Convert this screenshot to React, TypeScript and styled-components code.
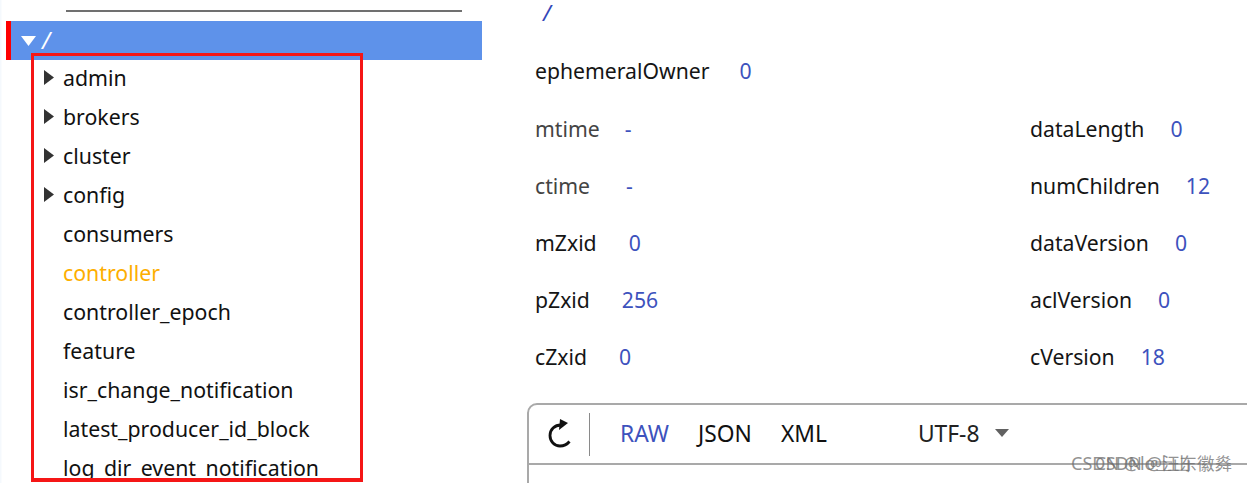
import React from "react";
import styled, { createGlobalStyle } from "styled-components";

const GlobalStyle = createGlobalStyle`
  html, body {
    margin: 0;
    padding: 0;
    background: #ffffff;
  }
  body {
    font-family: "Noto Sans", "Open Sans", sans-serif;
  }
`;

const nodes = [
  { name: "admin", arrow: true },
  { name: "brokers", arrow: true },
  { name: "cluster", arrow: true },
  { name: "config", arrow: true },
  { name: "consumers" },
  { name: "controller", active: true },
  { name: "controller_epoch" },
  { name: "feature" },
  { name: "isr_change_notification" },
  { name: "latest_producer_id_block" },
  { name: "log_dir_event_notification" },
];

const App: React.FC = () => (
  <Page>
    <GlobalStyle />
    <Sidebar>
      <Rule />
      <RootRow>
        <svg width="15" height="10" viewBox="0 0 15 10" aria-hidden="true">
          <polygon points="0,0 15,0 7.5,10" fill="#ffffff" />
        </svg>
        <RootLabel>/</RootLabel>
      </RootRow>
      <Tree>
        {nodes.map((n) => (
          <TreeRow key={n.name} $active={n.active}>
            <Caret>
              {n.arrow && (
                <svg width="10" height="15" viewBox="0 0 10 15" aria-hidden="true">
                  <polygon points="0,0 10,7.5 0,15" fill="#333333" />
                </svg>
              )}
            </Caret>
            {n.name}
          </TreeRow>
        ))}
      </Tree>
      <Highlight />
    </Sidebar>
    <Detail>
      <PathLabel>/</PathLabel>
      <FieldGrid>
        <WideField $gap={30}>
          <Key>ephemeralOwner</Key>
          <Value>0</Value>
        </WideField>
        <Field $gap={25}>
          <Key $muted>mtime</Key>
          <Value>-</Value>
        </Field>
        <Field>
          <Key>dataLength</Key>
          <Value>0</Value>
        </Field>
        <Field $gap={36}>
          <Key $muted>ctime</Key>
          <Value>-</Value>
        </Field>
        <Field>
          <Key>numChildren</Key>
          <Value>12</Value>
        </Field>
        <Field $gap={32}>
          <Key>mZxid</Key>
          <Value>0</Value>
        </Field>
        <Field>
          <Key>dataVersion</Key>
          <Value>0</Value>
        </Field>
        <Field $gap={32}>
          <Key>pZxid</Key>
          <Value>256</Value>
        </Field>
        <Field>
          <Key>aclVersion</Key>
          <Value>0</Value>
        </Field>
        <Field $gap={32}>
          <Key>cZxid</Key>
          <Value>0</Value>
        </Field>
        <Field>
          <Key>cVersion</Key>
          <Value>18</Value>
        </Field>
      </FieldGrid>
      <Editor>
        <Toolbar>
          <RefreshButton>
            <svg width="24" height="32" viewBox="0 0 24 32" aria-hidden="true">
              <path
                d="M14 7 C7.5 7 3 11.5 3 17.5 C3 23.5 7.5 28 13 28 C16.5 28 20 26.5 22.5 23.5"
                fill="none"
                stroke="#111111"
                strokeWidth="2.8"
              />
              <polygon points="13,1 21,5 12,12" fill="#111111" />
            </svg>
          </RefreshButton>
          <Tabs>
            <Tab $active>RAW</Tab>
            <Tab>JSON</Tab>
            <Tab>XML</Tab>
          </Tabs>
          <Encoding>
            UTF-8
            <svg width="14" height="8" viewBox="0 0 14 8" aria-hidden="true">
              <polygon points="0,0 14,0 7,8" fill="#616161" />
            </svg>
          </Encoding>
        </Toolbar>
      </Editor>
    </Detail>
    <Watermark>CSDN @lo士山</Watermark>
    <WatermarkGhost>CSDN @汪东徽㷠</WatermarkGhost>
  </Page>
);

const Page = styled.div`
  position: relative;
  display: flex;
  width: 1247px;
  height: 483px;
  overflow: hidden;
  background: #ffffff;
`;

const Sidebar = styled.aside`
  position: relative;
  flex: none;
  width: 482px;
  padding-left: 6px;
  box-sizing: border-box;
  background: linear-gradient(to right, #f5f9fd 0, #f5f9fd 1px, #ffffff 2px);
`;

const Rule = styled.div`
  height: 2px;
  margin: 10px 20px 9px 60px;
  background: #707070;
`;

const RootRow = styled.div`
  display: flex;
  align-items: center;
  gap: 6px;
  height: 39px;
  box-sizing: border-box;
  padding-left: 10px;
  border-left: 5px solid #fe0000;
  background: #5e92ea;
  color: #ffffff;
`;

const RootLabel = styled.span`
  font-size: 23px;
  font-style: italic;
  line-height: 1;
`;

const Tree = styled.div`
  display: flex;
  flex-direction: column;
  margin-top: -2px;
`;

const TreeRow = styled.div<{ $active?: boolean }>`
  display: flex;
  align-items: center;
  height: 39px;
  flex: none;
  font-size: 21.3px;
  white-space: nowrap;
  color: ${(p) => (p.$active ? "#fdae00" : "#111111")};
`;

const Caret = styled.span`
  display: flex;
  align-items: center;
  width: 19px;
  margin-left: 38px;
`;

const Highlight = styled.div`
  position: absolute;
  left: 31px;
  top: 53px;
  width: 326px;
  height: 422px;
  border: 3px solid #f51616;
  border-bottom-width: 4px;
`;

const Detail = styled.main`
  flex: 1;
  min-width: 0;
  padding-left: 45px;
`;

const PathLabel = styled.div`
  height: 24px;
  padding-left: 16px;
  font-size: 22px;
  font-style: italic;
  line-height: 24px;
  color: #3346b8;
`;

const FieldGrid = styled.div`
  display: grid;
  grid-template-columns: 495px 1fr;
  grid-auto-rows: 57px;
  margin-top: 19px;
  padding-left: 8px;
`;

const Field = styled.div<{ $gap?: number }>`
  display: flex;
  align-items: center;
  gap: ${(p) => p.$gap ?? 26}px;
  font-size: 21.2px;
  white-space: nowrap;
`;

const WideField = styled(Field)`
  grid-column: 1 / -1;
  padding-bottom: 2px;
`;

const Key = styled.span<{ $muted?: boolean }>`
  color: ${(p) => (p.$muted ? "#444444" : "#151515")};
`;

const Value = styled.span`
  color: #3d52bd;
`;

const Editor = styled.section`
  position: absolute;
  left: 527px;
  top: 403px;
  width: 760px;
  height: 100px;
  box-sizing: border-box;
  border: 2px solid #a9a9a9;
  border-radius: 10px 0 0 0;
`;

const Toolbar = styled.div`
  display: flex;
  align-items: center;
  height: 58px;
  border-bottom: 2px solid #a9a9a9;
  color: #111111;
  font-size: 22.8px;
`;

const RefreshButton = styled.div`
  display: flex;
  align-items: center;
  justify-content: center;
  width: 61px;
  height: 43px;
  box-sizing: border-box;
  border-right: 1px solid #8a8a8a;
`;

const Tabs = styled.div`
  display: flex;
  gap: 29px;
  margin-left: 30px;
  padding-bottom: 2px;
`;

const Tab = styled.span<{ $active?: boolean }>`
  color: ${(p) => (p.$active ? "#3d52bd" : "#111111")};
`;

const Encoding = styled.div`
  display: flex;
  align-items: center;
  gap: 16px;
  margin-left: 91px;
  padding-bottom: 2px;
  color: #222222;
`;

const Watermark = styled.div`
  position: absolute;
  left: 1071px;
  top: 451px;
  font-size: 18px;
  line-height: 24px;
  white-space: nowrap;
  color: rgba(110, 110, 110, 0.75);
`;

const WatermarkGhost = styled(Watermark)`
  left: 1095px;
  font-size: 17.5px;
  font-family: "Noto Sans", "Noto Sans CJK SC", sans-serif;
`;

export default App;
